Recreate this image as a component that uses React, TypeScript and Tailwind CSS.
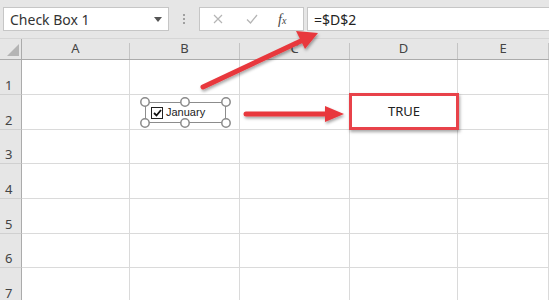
import React from "react";

const cols = ["A", "B", "C", "D", "E"];
const rowHeights = [35, 35, 34, 35, 35, 34, 35];

export default function App() {
  return (
    <div className="relative w-[549px] h-[300px] overflow-hidden bg-white font-['Noto_Sans',sans-serif]">
      {/* toolbar */}
      <div className="flex h-[39px] items-start bg-[#e6e6e6] pt-[7px] pl-[3px] border-b border-[#d6d6d6]">
        <div className="flex h-[24px] w-[166px] items-center justify-between border border-[#c6c6c6] bg-white pl-[6px] pr-[6px] text-[14px] text-[#333]">
          <span>Check Box 1</span>
          <svg width="8" height="5" viewBox="0 0 8 5"><path d="M0 0h8L4 5z" fill="#555" /></svg>
        </div>
        <div className="flex h-[24px] w-[30px] flex-col items-center justify-center gap-[2px]">
          <span className="h-[2px] w-[2px] bg-[#a0a0a0]" />
          <span className="h-[2px] w-[2px] bg-[#a0a0a0]" />
          <span className="h-[2px] w-[2px] bg-[#a0a0a0]" />
        </div>
        <div className="flex h-[24px] w-[105px] items-center border border-[#c6c6c6] bg-white">
          <svg className="ml-[13px]" width="10" height="10" viewBox="0 0 10 10"><path d="M1 1l8 8M9 1l-8 8" stroke="#b5b5b5" strokeWidth="1.2" /></svg>
          <svg className="ml-[23px]" width="12" height="10" viewBox="0 0 12 10"><path d="M1 5.5l3.5 3.5L11 1" stroke="#b5b5b5" strokeWidth="1.3" fill="none" /></svg>
          <span className="ml-[20px] font-['Liberation_Serif',serif] text-[14px] italic text-[#444]">f<span className="text-[10px]">x</span></span>
        </div>
        <div className="ml-[3px] flex h-[24px] flex-1 items-center border border-r-0 border-[#c6c6c6] bg-white pl-[6px] text-[14px] text-[#222]">
          =$D$2
        </div>
      </div>

      {/* grid */}
      <div className="grid grid-cols-[22px_108px_110px_110px_108px_1fr]">
        {/* header */}
        <div className="relative h-[21px] border-r border-b border-[#ababab] bg-[#e6e6e6]">
          <svg className="absolute left-[7px] top-[5px]" width="12" height="12" viewBox="0 0 12 12"><path d="M12 0v12H0z" fill="#b4b4b4" /></svg>
        </div>
        {cols.map((c) => (
          <div key={c} className="flex h-[21px] items-center justify-center border-b border-[#ababab] bg-[#e6e6e6] text-[13px] text-[#444]">
            <div className="flex h-full w-full items-center justify-center">
              <span>{c}</span>
            </div>
            <div className="mt-[4px] h-[16px] w-px shrink-0 bg-[#c4c4c4]" />
          </div>
        ))}
        {rowHeights.map((h, i) => (
          <React.Fragment key={i}>
            <div
              className="flex items-end border-r border-b border-r-[#ababab] border-b-[#d0d0d0] bg-[#e6e6e6] pb-[1px] pl-[5px] text-[13px] leading-[16px] text-[#444]"
              style={{ height: h }}
            >
              {i + 1}
            </div>
            {cols.map((c) => (
              <div key={c} className="border-r border-b border-[#dadada]" style={{ height: h }} />
            ))}
          </React.Fragment>
        ))}
      </div>

      {/* TRUE highlighted cell */}
      <div className="absolute left-[349px] top-[93px] flex h-[37px] w-[110px] items-center justify-center border-[3px] border-[#e8424a] bg-white text-[13px] text-[#222] shadow-[1px_2px_3px_rgba(0,0,0,0.35)]">
        TRUE
      </div>

      {/* checkbox form control */}
      <div className="absolute left-[145px] top-[102px] flex h-[21px] w-[81px] items-center border border-[#8c8c8c]">
        <div className="ml-[5px] flex h-[12px] w-[12px] items-center justify-center border border-[#222] bg-white">
          <svg width="9" height="8" viewBox="0 0 9 8"><path d="M1 4l2.5 2.5L8 1" stroke="#111" strokeWidth="1.8" fill="none" /></svg>
        </div>
        <span className="ml-[3px] font-['Liberation_Sans',sans-serif] text-[11px] text-[#222]">January</span>
      </div>
      <svg className="absolute left-0 top-0" width="549" height="300" viewBox="0 0 549 300">
        <defs>
          <filter id="sh" x="-20%" y="-50%" width="140%" height="200%">
            <feDropShadow dx="1" dy="2" stdDeviation="1.5" floodColor="#000" floodOpacity="0.35" />
          </filter>
        </defs>
        {[
          [145, 102], [185, 102], [226, 102],
          [145, 123], [185, 123], [226, 123],
        ].map(([x, y], i) => (
          <circle key={i} cx={x} cy={y} r="4.2" fill="#fff" stroke="#8a8a8a" strokeWidth="1.5" />
        ))}
        <g filter="url(#sh)" fill="#e8383d" stroke="#e8383d" strokeLinecap="round">
          {/* arrow 1 */}
          <line x1="203" y1="87" x2="303" y2="40" strokeWidth="5" />
          <path d="M318 33 L296 31 L305 49 Z" stroke="none" />
          {/* arrow 2 */}
          <line x1="246" y1="114" x2="328" y2="114" strokeWidth="5" />
          <path d="M344 114 L325 106 L325 122 Z" stroke="none" />
        </g>
      </svg>
    </div>
  );
}
